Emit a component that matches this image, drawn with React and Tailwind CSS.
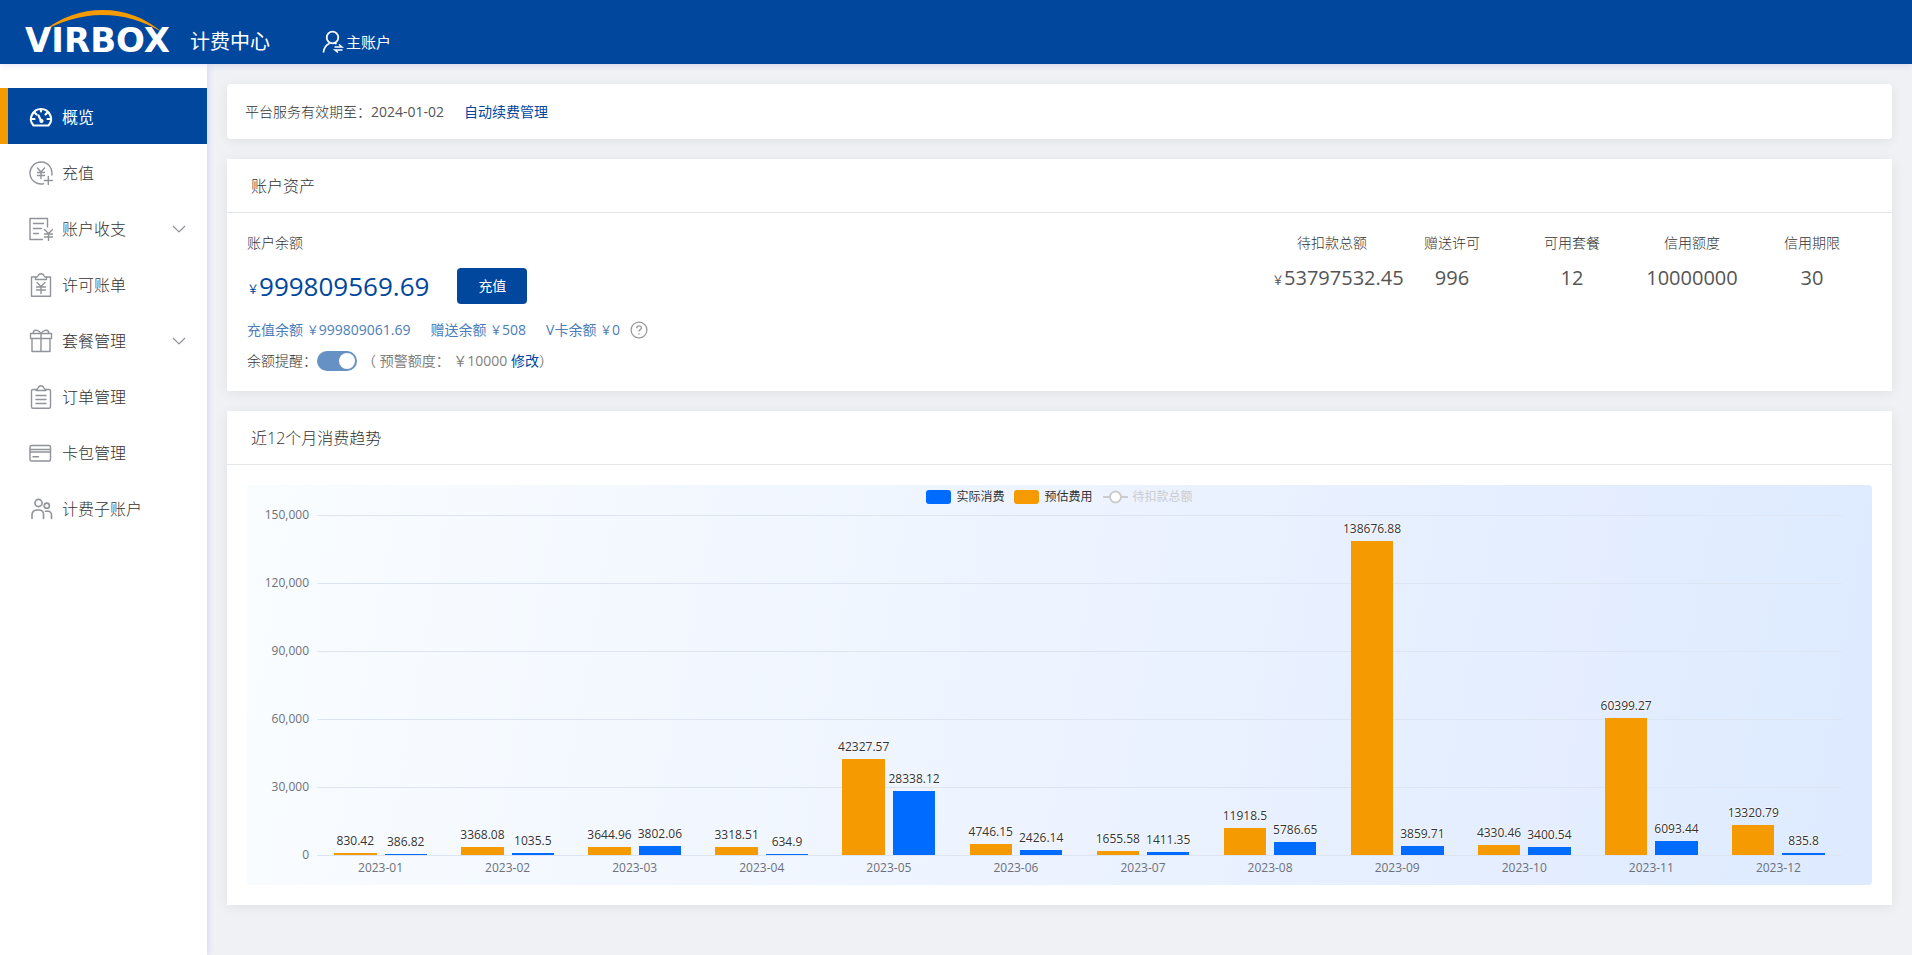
const menuItems = [
  { label: '概览', icon: GaugeIcon, active: true },
  { label: '充值', icon: RechargeIcon },
  { label: '账户收支', icon: LedgerIcon, expandable: true },
  { label: '许可账单', icon: BillIcon },
  { label: '套餐管理', icon: GiftIcon, expandable: true },
  { label: '订单管理', icon: OrderIcon },
  { label: '卡包管理', icon: CardIcon },
  { label: '计费子账户', icon: UsersIcon },
]

const stats = [
  { label: '待扣款总额', value: '53797532.45', money: true },
  { label: '赠送许可', value: '996' },
  { label: '可用套餐', value: '12' },
  { label: '信用额度', value: '10000000' },
  { label: '信用期限', value: '30' },
]

const balances = [
  { label: '充值余额', value: '999809061.69' },
  { label: '赠送余额', value: '508' },
  { label: 'V卡余额', value: '0' },
]

const MAX = 150000
const ticks = ['150,000', '120,000', '90,000', '60,000', '30,000', '0']

const months = [
  { month: '2023-01', estimate: 830.42, actual: 386.82 },
  { month: '2023-02', estimate: 3368.08, actual: 1035.5 },
  { month: '2023-03', estimate: 3644.96, actual: 3802.06 },
  { month: '2023-04', estimate: 3318.51, actual: 634.9 },
  { month: '2023-05', estimate: 42327.57, actual: 28338.12 },
  { month: '2023-06', estimate: 4746.15, actual: 2426.14 },
  { month: '2023-07', estimate: 1655.58, actual: 1411.35 },
  { month: '2023-08', estimate: 11918.5, actual: 5786.65 },
  { month: '2023-09', estimate: 138676.88, actual: 3859.71 },
  { month: '2023-10', estimate: 4330.46, actual: 3400.54 },
  { month: '2023-11', estimate: 60399.27, actual: 6093.44 },
  { month: '2023-12', estimate: 13320.79, actual: 835.8 },
]

function Icon({ children, width = 1.4 }) {
  return (
    <svg
      viewBox="0 0 24 24"
      className="h-6 w-6 shrink-0"
      fill="none"
      stroke="currentColor"
      strokeWidth={width}
      strokeLinecap="round"
      strokeLinejoin="round"
      aria-hidden="true">
      {children}
    </svg>
  )
}

function GaugeIcon() {
  return (
    <Icon width={2.2}>
      <path d="M4.5 20.5C1.4 17.5 1.2 13 3 9.8 4.8 6.2 8.200 4 12 4s7.200 2.200 9 5.800c1.800 3.200 1.600 7.700-1.500 10.700z" />
      <path d="M3 14h2.500M18.500 14h2.500M12 4.500v2M6 8l1.500 1.500M18 8l-1.500 1.500M9.500 10.500l2.500 5" />
      <circle cx="12.500" cy="16" r="1" />
    </Icon>
  )
}

function RechargeIcon() {
  return (
    <Icon>
      <path d="M22.800 14A11 11 0 1 0 14.500 22.700" />
      <path d="M8.500 7l3.500 4 3.500-4M12 11v6.500M8.500 11.500h7M8.500 14.500h7" />
      <path d="M19.300 15.500v8M15.300 19.500h8" />
    </Icon>
  )
}

function LedgerIcon() {
  return (
    <Icon>
      <path d="M18.500 10V1.500H1v21h12.500" />
      <path d="M4.500 6.500h10M4.500 11.500h8M4.500 16.500h5" />
      <path d="M15.500 12.500l4 4 4-4M19.500 16.500v7M15.500 17h8M15.500 20h8" />
    </Icon>
  )
}

function BillIcon() {
  return (
    <Icon>
      <path d="M7 4H2.500v19.300h19V4H17" />
      <path d="M6.500 6.500V4.500c1.500 0 2-.5 2.500-1.700C9.500 1.500 10.500.8 12 .8s2.500.7 3 2c.5 1.200 1 1.700 2.500 1.700v2z" />
      <path d="M8 9.500l4 4 4-4M12 13.500v7M7.500 14h9M7.500 17h9" />
    </Icon>
  )
}

function GiftIcon() {
  return (
    <Icon>
      <path d="M1.500 4.500h21v5h-21zM3 9.500v13h18v-13M12 4.500v18" />
      <path d="M12 4.500C10 1 6 .5 4.500 2.500 4 3.500 4.300 4.500 5 4.500M12 4.500C14 1 18 .5 19.500 2.500c.5 1 .2 2-.5 2" />
    </Icon>
  )
}

function OrderIcon() {
  return (
    <Icon>
      <path d="M7 4.500H4a1.500 1.500 0 0 0-1.500 1.500v15.800A1.500 1.500 0 0 0 4 23.300h16a1.500 1.500 0 0 0 1.500-1.500V6A1.500 1.500 0 0 0 20 4.500h-3" />
      <path d="M7 5.500c0-1.200 1.500-1 2.200-2.700C9.700 1.500 10.500.8 12 .8s2.300.7 2.800 2C15.500 4.500 17 4.300 17 5.500z" />
      <path d="M7 10.500h10M7 14.500h10M7 18.500h10" />
    </Icon>
  )
}

function CardIcon() {
  return (
    <Icon>
      <rect x="1" y="4.500" width="20.500" height="15.500" rx="1.500" />
      <path d="M1 8.500h20.500M1 11h20.500M4 15.700h5.500" />
    </Icon>
  )
}

function UsersIcon() {
  return (
    <Icon width={1.6}>
      <circle cx="9.500" cy="6" r="3.600" />
      <circle cx="17.800" cy="8.700" r="2.600" />
      <path d="M3 21.500V17.500a4.500 4.500 0 0 1 4.500-4.500h3.500a4.500 4.500 0 0 1 3.500 4.500v4M16.500 14.300h2.500a3.500 3.500 0 0 1 3.500 3.500v3.700" />
    </Icon>
  )
}

function Logo() {
  return (
    <a href="#" className="relative block h-full w-[150px] text-white">
      <svg viewBox="0 0 150 42" className="absolute top-2.5 left-0 h-[42px] w-[150px]" aria-hidden="true">
        <path
          d="M16 22.500C36 7 56 0 78 0s42 7.500 59.500 22.500C118 10.500 98 5 77 5S34 11.500 16 22.500z"
          fill="#f59a00"
        />
      </svg>
      <span className="absolute bottom-2 left-0 font-['DejaVu_Sans'] text-[34px] leading-8 font-bold">
        VIRBOX
      </span>
    </a>
  )
}

function Header() {
  return (
    <header className="relative z-20 flex h-16 items-center bg-[#00479d] pl-[25px] text-white shadow-[0_1px_6px_rgba(80,70,200,0.16)]">
      <Logo />
      <span className="ml-[15px] pt-5 text-xl leading-6">计费中心</span>
      <button type="button" className="ml-[52px] flex items-center gap-0.5 pt-5 text-[15px] leading-6">
        <svg
          viewBox="0 0 22 24"
          className="h-6 w-[22px]"
          fill="none"
          stroke="currentColor"
          strokeWidth="1.8"
          aria-hidden="true">
          <circle cx="10.500" cy="7.500" r="5.800" />
          <path d="M1.500 22.500c.3-4.500 2.500-7.500 6-9M13 13.200l1.500.8" />
          <path d="M12.500 17h7.500l-3-2.500M20.500 20H13l3 2.500" strokeWidth="1.600" />
        </svg>
        主账户
      </button>
    </header>
  )
}

function Sidebar() {
  return (
    <aside className="relative z-10 w-[207px] shrink-0 bg-white pt-6 shadow-[1px_0_6px_rgba(80,70,200,0.16)]">
      <nav>
        {menuItems.map(({ label, icon: ItemIcon, active, expandable }) => (
          <a
            key={label}
            href="#"
            className={
              active
                ? 'flex h-14 items-center border-l-8 border-[#f59a00] bg-[#00479d] pt-0.5 pr-[21px] pl-[21px] text-white'
                : 'flex h-14 items-center pt-0.5 pr-[21px] pl-[29px] text-[#909399]'
            }>
            <ItemIcon />
            <span
              className={
                active ? 'ml-[9px] flex-1 text-base' : 'ml-[9px] flex-1 text-base font-light text-[#333]'
              }>
              {label}
            </span>
            {expandable && (
              <svg
                viewBox="0 0 14 8"
                className="h-2 w-3.5"
                fill="none"
                stroke="currentColor"
                strokeWidth="1.200"
                aria-hidden="true">
                <path d="M1 1l6 6 6-6" />
              </svg>
            )}
          </a>
        ))}
      </nav>
    </aside>
  )
}

function Card({ title, children }) {
  return (
    <section className="bg-white shadow-[0_2px_12px_rgba(0,0,0,0.07)]">
      <h2 className="border-b border-[#e4e6ea] px-6 pt-[15px] pb-3.5 text-base leading-6 font-light text-[#333]">
        {title}
      </h2>
      <div className="p-5">{children}</div>
    </section>
  )
}

function Assets() {
  return (
    <div className="flex justify-between">
      <div>
        <div className="leading-5 font-light text-[#333]">账户余额</div>
        <div className="mt-[15px] flex h-9 items-center text-[#00479d]">
          <span className="pt-2 text-xs">￥</span>
          <span className="text-[26px] leading-9">999809569.69</span>
          <button type="button" className="ml-7 h-9 w-[70px] rounded bg-[#00479d] text-sm text-white">
            充值
          </button>
        </div>
        <div className="mt-4 flex h-5 items-center gap-5 text-[#4a7dba]">
          {balances.map(({ label, value }) => (
            <span key={label}>
              {label} <span className="text-xs">￥</span>
              {value}
            </span>
          ))}
          <button type="button" aria-label="余额说明" className="-ml-2.5 text-[#999]">
            <svg
              viewBox="0 0 18 18"
              className="h-[18px] w-[18px]"
              fill="none"
              stroke="currentColor"
              strokeWidth="1.300"
              aria-hidden="true">
              <circle cx="9" cy="9" r="7.900" />
              <path d="M6.700 7.200c0-3.200 4.700-3.100 4.700-.2 0 1.600-2.400 1.700-2.400 3.500M9 12.200v1.300" />
            </svg>
          </button>
        </div>
        <div className="mt-[11px] flex h-5 items-center">
          <label htmlFor="remind" className="font-light text-[#333]">
            余额提醒：
          </label>
          <input
            id="remind"
            type="checkbox"
            role="switch"
            defaultChecked
            className="h-5 w-10 appearance-none rounded-full bg-[#c0c4cc] p-0.5 before:block before:size-4 before:rounded-full before:bg-white checked:bg-[#6691c4] checked:before:ml-5"
          />
          <span className="ml-[5px] text-[#808080]">
            （ 预警额度： ￥10000{' '}
            <a href="#" className="text-[#00479d]">
              修改
            </a>
            ）
          </span>
        </div>
      </div>
      <dl className="flex text-center">
        {stats.map(({ label, value, money }) => (
          <div key={label} className="w-[120px]">
            <dt className="leading-5 font-light text-[#333]">{label}</dt>
            <dd className="mt-2.5 text-xl leading-[30px] whitespace-nowrap">
              {money && <span className="text-xs">￥</span>}
              {value}
            </dd>
          </div>
        ))}
      </dl>
    </div>
  )
}

function Bar({ value, color }) {
  return (
    <div className="flex h-full w-1/3 flex-col items-center justify-end">
      <span className="mb-[5px] leading-3.5 whitespace-nowrap text-[#333] [text-shadow:0_0_2px_#fff,0_0_2px_#fff,0_0_2px_#fff]">
        {value}
      </span>
      <div className={`min-h-px w-full shrink-0 ${color}`} style={{ height: `${(value / MAX) * 100}%` }} />
    </div>
  )
}

function Legend() {
  return (
    <div className="flex justify-center gap-2.5 leading-3.5 text-[#333]">
      <button type="button" className="flex items-center gap-[5px]">
        <span className="h-3.5 w-[25px] rounded-[3px] bg-[#006bff]" />
        实际消费
      </button>
      <button type="button" className="flex items-center gap-[5px]">
        <span className="h-3.5 w-[25px] rounded-[3px] bg-[#f59a00]" />
        预估费用
      </button>
      <button type="button" className="flex items-center gap-[5px] text-[#ccc]">
        <svg viewBox="0 0 25 14" className="h-3.5 w-[25px]" stroke="#ccc" strokeWidth="2" aria-hidden="true">
          <path d="M0 7h25" />
          <circle cx="12.500" cy="7" r="5.500" fill="#fff" />
        </svg>
        待扣款总额
      </button>
    </div>
  )
}

function TrendChart() {
  return (
    <div className="h-[400px] rounded bg-linear-100 from-[#f9fdff] via-[#edf3ff] to-[#ddeaff] pt-[5px] text-xs">
      <Legend />
      <div className="mt-[11px] flex pr-[30px]">
        <div className="-mt-px flex h-[341px] w-[70px] flex-col justify-between pr-2 text-[#6e7079]">
          {ticks.map((tick) => (
            <span key={tick} className="flex h-px items-center justify-end">
              {tick}
            </span>
          ))}
        </div>
        <div className="min-w-0 flex-1">
          <div className="relative h-[341px]">
            <div className="absolute inset-0 flex flex-col justify-between">
              {ticks.map((tick) => (
                <div key={tick} className="h-px bg-[#dde5f3]" />
              ))}
            </div>
            <div className="relative flex h-[340px]">
              {months.map(({ month, estimate, actual }) => (
                <div key={month} className="flex flex-1 justify-center gap-2">
                  <Bar value={estimate} color="bg-[#f59a00]" />
                  <Bar value={actual} color="bg-[#006bff]" />
                </div>
              ))}
            </div>
          </div>
          <div className="mt-1 flex leading-4 text-[#6e7079]">
            {months.map(({ month }) => (
              <span key={month} className="flex-1 text-center">
                {month}
              </span>
            ))}
          </div>
        </div>
      </div>
    </div>
  )
}

export default function App() {
  return (
    <div className="flex min-h-screen flex-col bg-[#eff1f5] font-['Open_Sans','Noto_Sans_CJK_SC',sans-serif] text-sm text-[#555]">
      <Header />
      <div className="flex flex-1">
        <Sidebar />
        <main className="flex min-w-0 flex-1 flex-col gap-5 p-5">
          <section className="flex h-[55px] items-center rounded bg-white px-[18px] shadow-[0_2px_12px_rgba(0,0,0,0.07)]">
            <span>
              <span className="font-light text-[#333]">平台服务有效期至：</span>2024-01-02
            </span>
            <a href="#" className="ml-5 text-[#00479d]">
              自动续费管理
            </a>
          </section>
          <Card title="账户资产">
            <Assets />
          </Card>
          <Card title="近12个月消费趋势">
            <TrendChart />
          </Card>
        </main>
      </div>
    </div>
  )
}
